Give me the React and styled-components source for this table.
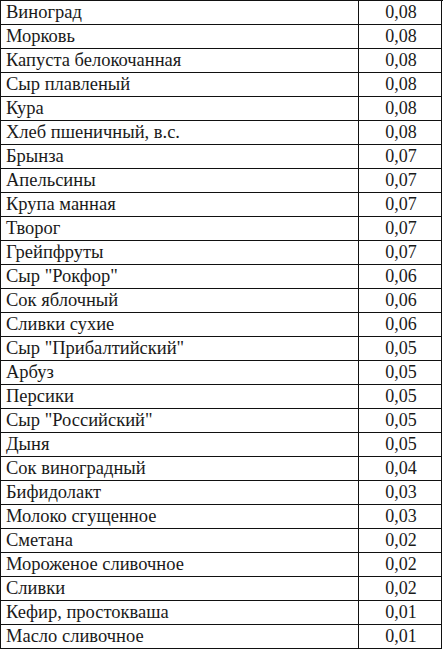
import React from "react";
import styled, { createGlobalStyle } from "styled-components";

const Global = createGlobalStyle`
  html, body { margin: 0; padding: 0; background: #fff; }
`;

const rows = [
  ["Виноград", "0,08"],
  ["Морковь", "0,08"],
  ["Капуста белокочанная", "0,08"],
  ["Сыр плавленый", "0,08"],
  ["Кура", "0,08"],
  ["Хлеб пшеничный, в.с.", "0,08"],
  ["Брынза", "0,07"],
  ["Апельсины", "0,07"],
  ["Крупа манная", "0,07"],
  ["Творог", "0,07"],
  ["Грейпфруты", "0,07"],
  ["Сыр \"Рокфор\"", "0,06"],
  ["Сок яблочный", "0,06"],
  ["Сливки сухие", "0,06"],
  ["Сыр \"Прибалтийский\"", "0,05"],
  ["Арбуз", "0,05"],
  ["Персики", "0,05"],
  ["Сыр \"Российский\"", "0,05"],
  ["Дыня", "0,05"],
  ["Сок виноградный", "0,04"],
  ["Бифидолакт", "0,03"],
  ["Молоко сгущенное", "0,03"],
  ["Сметана", "0,02"],
  ["Мороженое сливочное", "0,02"],
  ["Сливки", "0,02"],
  ["Кефир, простокваша", "0,01"],
  ["Масло сливочное", "0,01"],
];

const Table = styled.div`
  width: 443px;
  display: grid;
  grid-template-columns: 358px 83px;
  border-top: 1px solid #111;
  border-left: 1px solid #111;
  box-sizing: border-box;
`;

const Cell = styled.div`
  height: 23px;
  border-right: 1px solid #111;
  border-bottom: 1px solid #111;
  display: flex;
  align-items: center;
  justify-content: ${(p) => (p.$num ? "center" : "flex-start")};
  padding-left: ${(p) => (p.$num ? "2px" : "5px")};
  font-family: "Liberation Serif", serif;
  font-size: ${(p) => (p.$num ? "18px" : "18.5px")};
  color: #1a1a1a;
  white-space: nowrap;
`;

export default function App() {
  return (
    <>
      <Global />
      <Table>
        {rows.map(([name, val]) => (
          <React.Fragment key={name}>
            <Cell>{name}</Cell>
            <Cell $num>{val}</Cell>
          </React.Fragment>
        ))}
      </Table>
    </>
  );
}
